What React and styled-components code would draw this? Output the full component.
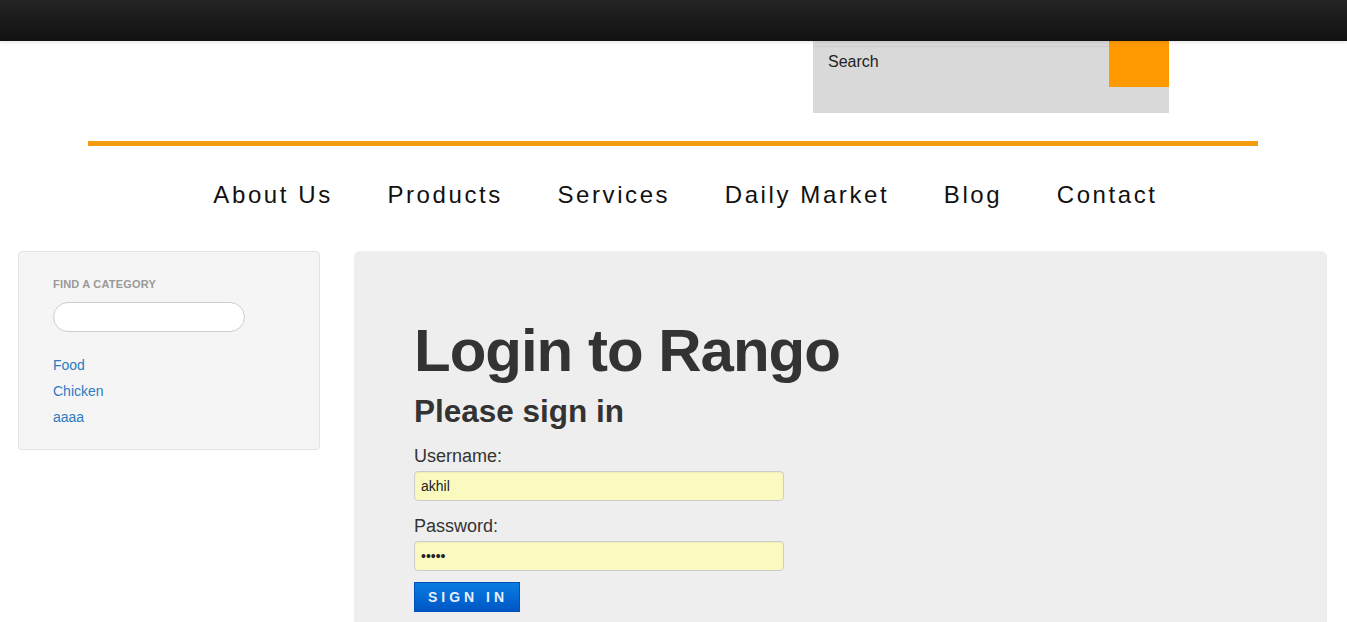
import styled, { createGlobalStyle } from "styled-components";

const GlobalStyle = createGlobalStyle`
    html, body {
        margin: 0;
        padding: 0;
        background: #fff;
        font-family: "Liberation Sans", Arial, sans-serif;
        color: #333;
    }
    * { box-sizing: border-box; }
`

const categories = ["Food", "Chicken", "aaaa"];
const menu = ["About Us", "Products", "Services", "Daily Market", "Blog", "Contact"];

export default function App() {
    return (
        <>
            <GlobalStyle />
            <TopBar />

            <Header>
                <SearchBox>
                    <SearchInput placeholder="Search" />
                    <SearchButton />
                </SearchBox>
            </Header>

            <Divider />

            <Menu>
                {menu.map(item => <MenuItem key={item} href="#">{item}</MenuItem>)}
            </Menu>

            <Content>
                <Sidebar>
                    <SidebarHeader>Find a category</SidebarHeader>
                    <CategorySearch type="text" />
                    <CategoryList>
                        {categories.map(c => <li key={c}><CategoryLink href="#">{c}</CategoryLink></li>)}
                    </CategoryList>
                </Sidebar>

                <Hero>
                    <Title>Login to Rango</Title>
                    <Subtitle>Please sign in</Subtitle>
                    <LoginForm onSubmit={e => e.preventDefault()}>
                        <Label>Username:</Label>
                        <Field type="text" defaultValue="akhil" />
                        <Label>Password:</Label>
                        <Field type="password" defaultValue="akhil" />
                        <SignIn type="submit">Sign in</SignIn>
                    </LoginForm>
                </Hero>
            </Content>
        </>
    );
}

const TopBar = styled.div`
    height: 41px;
    background: linear-gradient(to bottom, #242424, #111111);
    box-shadow: 0 1px 4px rgba(0, 0, 0, 0.12);
    position: relative;
    z-index: 1;
`

const Header = styled.div`
    width: 1170px;
    margin-left: calc(50% - 585.5px);
    display: flex;
    justify-content: flex-end;
    padding-right: 89px;
`

const SearchBox = styled.div`
    width: 356px;
    height: 72px;
    background: #d9d9d9;
    display: flex;
    align-items: flex-start;
`

const SearchInput = styled.input`
    flex: 1;
    height: 37px;
    margin-top: 5px;
    border: none;
    border-top: 1px solid #cccccc;
    background: transparent;
    padding: 0 15px 6px;
    font-family: "Liberation Sans", Arial, sans-serif;
    font-size: 16px;
    outline: none;
    &::placeholder { color: #222; }
`

const SearchButton = styled.div`
    width: 60px;
    height: 46px;
    background: #ff9900;
`

const Divider = styled.div`
    width: 1170px;
    height: 5px;
    margin: 28px 0 0 calc(50% - 585.5px);
    background: #f39c0f;
`

const Menu = styled.nav`
    display: flex;
    justify-content: center;
    gap: 54.5px;
    padding: 32px 0 0 24px;
    height: 105px;
`

const MenuItem = styled.a`
    font-size: 24px;
    line-height: 34px;
    letter-spacing: 2.6px;
    color: #111;
    text-decoration: none;
`

const Content = styled.div`
    display: grid;
    grid-template-columns: 302px 1fr;
    gap: 34px;
    padding: 0 20px 0 18px;
    align-items: start;
`

const Sidebar = styled.div`
    background: #f5f5f5;
    border: 1px solid #e3e3e3;
    border-radius: 4px;
    padding: 22px 0 19px 34px;
    height: 199px;
`

const SidebarHeader = styled.div`
    font-size: 11px;
    font-weight: bold;
    line-height: 20px;
    letter-spacing: 0.2px;
    text-transform: uppercase;
    color: #999;
`

const CategorySearch = styled.input`
    display: block;
    width: 192px;
    height: 30px;
    margin: 8px 0 20px;
    border: 1px solid #cccccc;
    border-radius: 15px;
    background: #fff;
    outline: none;
`

const CategoryList = styled.ul`
    list-style: none;
    margin: 0;
    padding: 0;
    li { line-height: 26px; }
`

const CategoryLink = styled.a`
    font-size: 14px;
    color: #2f7bbf;
    text-decoration: none;
`

const Hero = styled.div`
    background: #eeeeee;
    border-radius: 6px;
    padding: 70px 60px 60px;
    min-height: 420px;
`

const Title = styled.h1`
    margin: 0;
    font-size: 60px;
    line-height: 60px;
    font-weight: bold;
    letter-spacing: -1px;
    color: #333;
`

const Subtitle = styled.h2`
    margin: 10px 0;
    font-size: 31.5px;
    line-height: 40px;
    font-weight: bold;
    color: #333;
`

const LoginForm = styled.form`
    display: flex;
    flex-direction: column;
    align-items: flex-start;
`

const Label = styled.label`
    font-size: 18px;
    line-height: 30px;
    color: #333;
`

const Field = styled.input`
    width: 370px;
    height: 30px;
    margin-bottom: 10px;
    padding: 4px 6px;
    border: 1px solid #cccccc;
    border-radius: 4px;
    background: #fafac0;
    font-family: "Liberation Sans", Arial, sans-serif;
    font-size: 14px;
    color: #222;
    box-shadow: inset 0 1px 1px rgba(0, 0, 0, 0.05);
    outline: none;
`

const SignIn = styled.button`
    height: 30px;
    margin-top: 1px;
    padding: 0 11px 0 13px;
    border: 1px solid #0050b8;
    background: linear-gradient(to bottom, #0a7de2, #0056c6);
    color: #e6f0ff;
    font-family: "Liberation Sans", Arial, sans-serif;
    font-size: 14px;
    font-weight: bold;
    letter-spacing: 4px;
    text-transform: uppercase;
    cursor: pointer;
`
